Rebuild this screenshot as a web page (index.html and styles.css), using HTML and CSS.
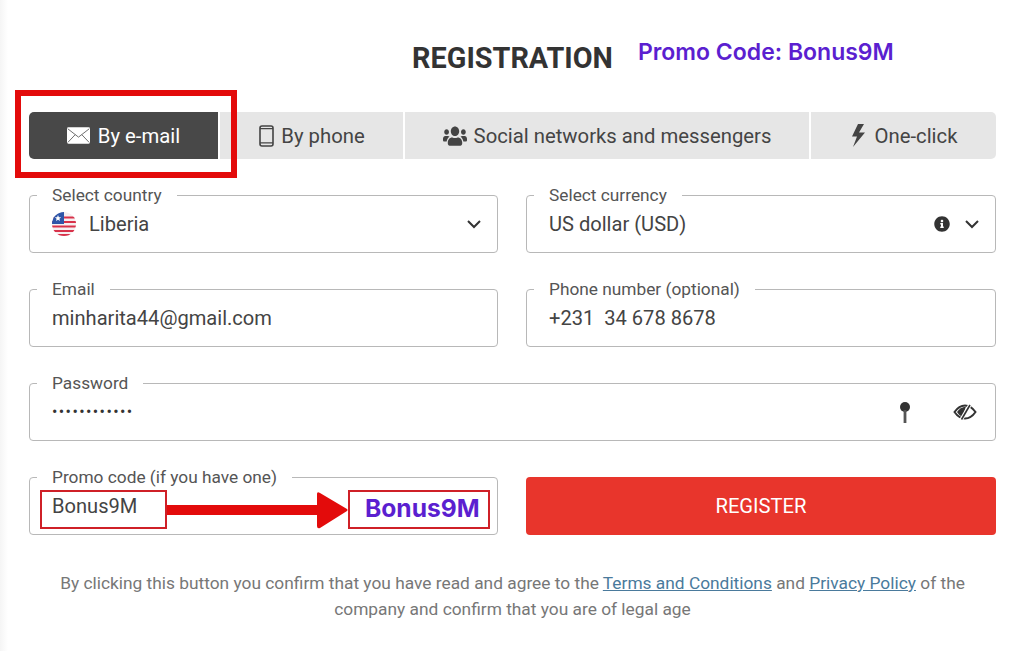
FILE: index.html
```html
<!DOCTYPE html>
<html lang="en">
<head>
    <meta charset="UTF-8">
    <meta name="viewport" content="width=device-width, initial-scale=1.0">
    <title>Registration</title>
    <link rel="stylesheet" href="styles.css">
</head>
<body>
    <div class="page">
        <!-- Header -->
        <div class="header">
            <h1>REGISTRATION</h1>
            <div class="promo-note">Promo Code: Bonus9M</div>
        </div>

        <!-- Tabs -->
        <div class="tabs">
            <div class="tab active">
                <svg class="icon-mail" viewBox="0 0 24 17"><rect width="24" height="17" rx="1.5" fill="#fff"/><path d="M.8 1.5 12 10.2 23.2 1.5M.8 15.8 8.6 7.6M23.2 15.8 15.4 7.6" fill="none" stroke="#6a6a6a" stroke-width="1"/></svg>
                By e-mail
            </div>
            <div class="tab">
                <svg class="icon-phone" viewBox="0 0 15 22"><rect x="1" y="1" width="13" height="20" rx="2" fill="none" stroke="#444" stroke-width="1.6"/><path d="M1 17.8h13M1 3.6h13" stroke="#444" stroke-width="1.2"/></svg>
                By phone
            </div>
            <div class="tab">
                <svg class="icon-users" viewBox="0 0 640 512" preserveAspectRatio="none"><path fill="#444" d="M96 224c35.3 0 64-28.7 64-64s-28.7-64-64-64-64 28.7-64 64 28.7 64 64 64zm448 0c35.3 0 64-28.7 64-64s-28.7-64-64-64-64 28.7-64 64 28.7 64 64 64zm32 32h-64c-17.6 0-33.5 7.1-45.1 18.6 40.3 22.1 68.9 62 75.1 109.4h66c17.7 0 32-14.3 32-32v-32c0-35.3-28.7-64-64-64zm-256 0c61.9 0 112-50.1 112-112S381.9 32 320 32 208 82.1 208 144s50.1 112 112 112zm76.8 32h-8.3c-20.8 10-43.9 16-68.5 16s-47.6-6-68.5-16h-8.3C179.6 288 128 339.6 128 403.2V432c0 26.5 21.5 48 48 48h288c26.5 0 48-21.5 48-48v-28.8c0-63.6-51.6-115.2-115.2-115.2zm-223.7-13.4C161.5 263.1 145.6 256 128 256H64c-35.3 0-64 28.7-64 64v32c0 17.7 14.3 32 32 32h65.9c6.3-47.4 34.9-87.3 75.2-109.4z"/></svg>
                Social networks and messengers
            </div>
            <div class="tab">
                <svg class="icon-bolt" viewBox="0 0 16 23"><path fill="#444" d="M8 0 2 12.500h5L3 23 15 8.500H9L14 0z"/></svg>
                One-click
            </div>
            <div class="tab-highlight"></div>
        </div>

        <!-- Form -->
        <div class="form">
            <fieldset class="field">
                <legend>Select country</legend>
                <svg class="flag" viewBox="0 0 24 24">
                    <clipPath id="flag-clip"><circle cx="12" cy="12" r="12"/></clipPath>
                    <g clip-path="url(#flag-clip)">
                        <rect width="24" height="24" fill="#f6eef0"/>
                        <path d="M0 5.500h24M0 10h24M0 14.500h24M0 19h24M0 23h24" stroke="#d8324a" stroke-width="2.200"/>
                        <rect width="12" height="12" fill="#2d55a8"/>
                        <path d="m6 3 .9 2.200 2.300.1-1.800 1.500.6 2.300L6 7.800 4 9.100l.6-2.300-1.800-1.500 2.300-.1z" fill="#fff"/>
                    </g>
                </svg>
                <span class="value country">Liberia</span>
                <svg class="chevron" viewBox="0 0 16 10"><path d="M2 2l6 6 6-6" fill="none" stroke="#333" stroke-width="2"/></svg>
            </fieldset>

            <fieldset class="field">
                <legend>Select currency</legend>
                <span class="value">US dollar (USD)</span>
                <svg class="icon-info" viewBox="0 0 512 512"><path fill="#333" d="M256 8C119 8 8 119.1 8 256c0 137 111 248 248 248s248-111 248-248C504 119.1 393 8 256 8zm0 110c23.2 0 42 18.8 42 42s-18.8 42-42 42-42-18.8-42-42 18.8-42 42-42zm56 254c0 6.6-5.4 12-12 12h-88c-6.6 0-12-5.4-12-12v-24c0-6.6 5.4-12 12-12h12v-64h-12c-6.6 0-12-5.4-12-12v-24c0-6.6 5.4-12 12-12h64c6.6 0 12 5.4 12 12v100h12c6.6 0 12 5.4 12 12v24z"/></svg>
                <svg class="chevron chevron-small" viewBox="0 0 16 10"><path d="M2 2l6 6 6-6" fill="none" stroke="#333" stroke-width="2"/></svg>
            </fieldset>

            <fieldset class="field">
                <legend>Email</legend>
                <span class="value">minharita44@gmail.com</span>
            </fieldset>

            <fieldset class="field">
                <legend>Phone number (optional)</legend>
                <span class="value">+231&nbsp; 34 678 8678</span>
            </fieldset>

            <fieldset class="field wide password">
                <legend>Password</legend>
                <span class="dots">••••••••••••</span>
                <svg class="icon-key" viewBox="0 0 12 21"><circle cx="6" cy="5" r="5" fill="#333"/><rect x="4.600" y="8" width="2.800" height="13" fill="#555"/></svg>
                <svg class="icon-eye" viewBox="0 0 24 18"><path d="M1.500 9C5 4 8.500 2.500 12 2.500S19 4 22.500 9C19 14 15.500 15.500 12 15.500S5 14 1.500 9z" fill="none" stroke="#333" stroke-width="2"/><path d="M4 9c2-3 5-5 9-5.500L9.500 14C7 13 5.500 11 4 9z" fill="#333"/><path d="M17.500 1 8 17" stroke="#fff" stroke-width="3.500"/><path d="M17 2 8.500 16.500" stroke="#333" stroke-width="1.600"/></svg>
            </fieldset>

            <fieldset class="field promo">
                <legend>Promo code (if you have one)</legend>
                <span class="mark-box">Bonus9M</span>
                <svg class="arrow" viewBox="0 0 181 40"><path d="M0 15h150V4q0-3 3-1l27 16q1 1 0 2L153 38q-3 1-3-2V25H0z" fill="#e30b0b"/></svg>
                <span class="mark-box mark-code">Bonus9M</span>
            </fieldset>

            <button class="register" type="button">REGISTER</button>
        </div>

        <p class="terms">By clicking this button you confirm that you have read and agree to the <a href="#">Terms and Conditions</a> and <a href="#">Privacy Policy</a> of the company and confirm that you are of legal age</p>
    </div>
</body>
</html>
```
FILE: styles.css
```css
/* General Styling */
body {
    margin: 0;
    font-family: Roboto, "Liberation Sans", sans-serif;
    color: #444;
    background: linear-gradient(to right, #f5f5f5, #fff 8px);
}

.page {
    height: 651px;
    box-sizing: border-box;
    padding: 0 29px;
    overflow: hidden;
}

/* Header */
.header {
    display: grid;
    grid-template-columns: 1fr auto 1fr;
    height: 112px;
}

.header h1 {
    grid-column: 2;
    margin: 41px 0 0;
    font-size: 28.800px;
    line-height: 34px;
    font-weight: 700;
    color: #333;
}

.promo-note {
    margin: 38px 0 0 25px;
    font-family: Inter, sans-serif;
    font-size: 23px;
    line-height: 28px;
    font-weight: 600;
    color: #5b1fd0;
    white-space: nowrap;
}

/* Tabs */
.tabs {
    position: relative;
    display: grid;
    grid-template-columns: 189px 183px 404px 185px;
    gap: 2px;
    height: 47px;
    margin-bottom: 27px;
}

.tab {
    display: flex;
    align-items: center;
    justify-content: center;
    gap: 8px;
    font-size: 20.300px;
    background-color: #e6e6e6;
}

.tab:nth-child(4) {
    border-radius: 0 5px 5px 0;
}

.tab.active {
    color: #fff;
    background-color: #484848;
    border-radius: 5px 0 0 5px;
}

.tab-highlight {
    position: absolute;
    left: -14px;
    top: -22px;
    width: 222px;
    height: 88px;
    box-sizing: border-box;
    border: 6px solid #e30b0b;
}

.icon-mail { width: 23px; height: 17px; }
.icon-phone { width: 15px; height: 22px; margin-left: 1px; margin-right: -1px; }
.icon-users { width: 24px; height: 22px; margin-right: -1px; }
.icon-bolt { width: 16px; height: 23px; margin-right: 1px; }

/* Form */
.form {
    display: grid;
    grid-template-columns: 469px 470px;
    column-gap: 28px;
    row-gap: 27px;
}

/* the legend sits on the top border, so the box starts 9px above it */
.field {
    display: flex;
    align-items: center;
    height: 67px;
    min-width: 0;
    box-sizing: border-box;
    margin: 0;
    padding: 0 22px 8px;
    border: 1px solid #b8b8b8;
    border-radius: 4px;
}

.field legend {
    margin-left: -15px;
    padding: 0 15px;
    font-size: 17.300px;
    line-height: 18px;
    color: #555;
}

.wide {
    grid-column: 1 / span 2;
}

.value {
    flex: 1;
    font-size: 20.100px;
    color: #444;
}

.country {
    margin-left: 13px;
}

.flag {
    width: 24px;
    height: 24px;
    flex: none;
}

.chevron {
    width: 16px;
    height: 10px;
    margin-right: -7px;
    flex: none;
}

.chevron-small {
    margin-left: 14px;
}

.icon-info {
    width: 16px;
    height: 16px;
}

.password {
    padding-bottom: 10px;
}

.dots {
    flex: 1;
    font-size: 16px;
    letter-spacing: 1.400px;
    color: #333;
}

.icon-key {
    width: 12px;
    height: 21px;
    margin-top: 2px;
}

.icon-eye {
    width: 24px;
    height: 18px;
    margin: 2px -4px 0 42px;
}

/* Promo field with its marks */
.promo {
    padding: 4px 7px 0 10px;
    align-items: flex-start;
}

.promo legend {
    margin-left: -3px;
}

.mark-box {
    display: flex;
    align-items: center;
    width: 127px;
    height: 39px;
    box-sizing: border-box;
    padding: 0 0 8px 10px;
    border: 2px solid #cf2027;
    font-size: 20.100px;
    flex: none;
}

.arrow {
    width: 181px;
    height: 40px;
    flex: none;
}

.mark-code {
    width: 142px;
    padding: 0 0 4px 15px;
    font-family: Inter, sans-serif;
    font-size: 24.600px;
    font-weight: 700;
    color: #5b1fd0;
}

.register {
    height: 58px;
    align-self: end;
    border: none;
    border-radius: 4px;
    font-family: inherit;
    font-size: 20.200px;
    color: #fff;
    background-color: #e8352c;
}

/* Footer text */
.terms {
    margin: 35px 0 0;
    font-size: 17.340px;
    line-height: 26px;
    text-align: center;
    color: #777;
}

.terms a {
    color: #4a7a9c;
}
```
